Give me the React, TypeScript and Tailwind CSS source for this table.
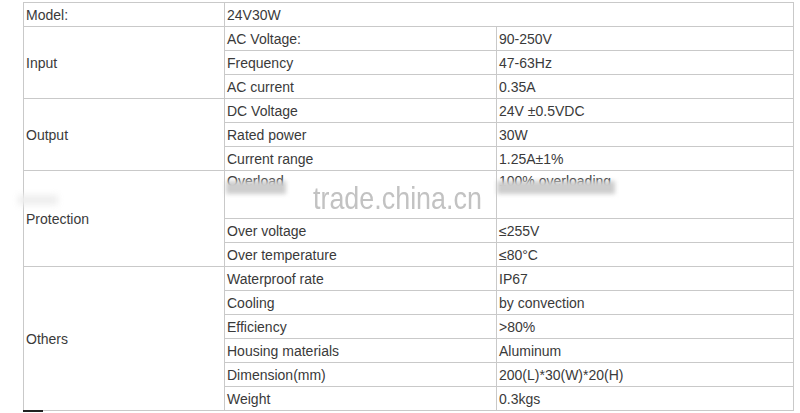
import React from "react";

type Row = { group?: string; span?: number; label: string; value: string; tall?: boolean };

const rows: Row[] = [
  { group: "Input", span: 3, label: "AC Voltage:", value: "90-250V" },
  { label: "Frequency", value: "47-63Hz" },
  { label: "AC current", value: "0.35A" },
  { group: "Output", span: 3, label: "DC Voltage", value: "24V ±0.5VDC" },
  { label: "Rated power", value: "30W" },
  { label: "Current range", value: "1.25A±1%" },
  { group: "Protection", span: 3, label: "Overload", value: "100% overloading", tall: true },
  { label: "Over voltage", value: "≤255V" },
  { label: "Over temperature", value: "≤80°C" },
  { group: "Others", span: 6, label: "Waterproof rate", value: "IP67" },
  { label: "Cooling", value: "by convection" },
  { label: "Efficiency", value: ">80%" },
  { label: "Housing materials", value: "Aluminum" },
  { label: "Dimension(mm)", value: "200(L)*30(W)*20(H)" },
  { label: "Weight", value: "0.3kgs" },
];

const cell = "border border-[#c9c9c9] px-[2px] leading-[16px]";

export default function App() {
  return (
    <div className="relative w-[800px] h-[413px] overflow-hidden bg-white pt-[2px] pl-[23px] text-[14px] text-[#3a3a3a] font-['Liberation_Sans',Arial,sans-serif]">
      <table className="border-collapse w-[770px] table-fixed">
        <colgroup>
          <col className="w-[201px]" />
          <col className="w-[272px]" />
          <col className="w-[297px]" />
        </colgroup>
        <tbody>
          <tr className="h-[24px]">
            <td className={cell}>Model:</td>
            <td className={cell} colSpan={2}>24V30W</td>
          </tr>
          {rows.map((r) => (
            <tr key={r.label} className={r.tall ? "h-[48px]" : "h-[24px]"}>
              {r.group && (
                <td className={cell} rowSpan={r.span}>
                  {r.group}
                </td>
              )}
              <td className={`${cell} ${r.tall ? "align-top pt-[2px]" : ""}`}>{r.label}</td>
              <td className={`${cell} ${r.tall ? "align-top pt-[2px]" : ""}`}>{r.value}</td>
            </tr>
          ))}
        </tbody>
      </table>

      {/* watermark blur smudges */}
      <div className="absolute left-[226px] top-[181px] w-[60px] h-[13px] bg-[#cdcdcd] blur-[2px]" />
      <div className="absolute left-[497px] top-[181px] w-[118px] h-[13px] bg-[#cdcdcd] blur-[2px]" />
      <div className="absolute left-[18px] top-[195px] w-[40px] h-[10px] bg-[#eeeeee] blur-[3px]" />
      <div className="absolute left-[313px] top-[180px] text-[32px] leading-[36px] text-[#c2c2c2] scale-x-[0.84] origin-left">
        trade.china.cn
      </div>

      <div className="absolute left-[23px] top-[410px] w-[20px] h-[2px] bg-[#222]" />
    </div>
  );
}
